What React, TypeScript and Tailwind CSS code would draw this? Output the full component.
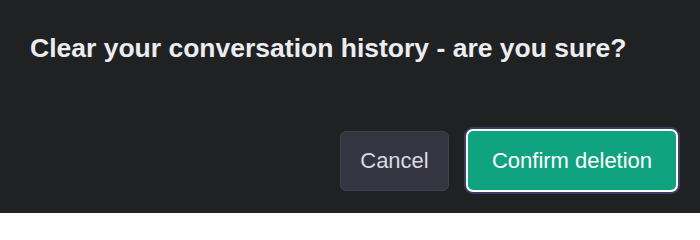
export default function App() {
  return (
    <div className="w-[700px] h-[213px] bg-[#202123] font-['Liberation_Sans',Arial,sans-serif] flex flex-col">
      <h2 className="pl-[30px] pt-[33px] text-[26.5px] leading-[30px] font-bold text-[#ececf1]">
        Clear your conversation history - are you sure?
      </h2>
      <div className="flex justify-end items-center gap-[17px] pr-[22px] mt-auto mb-[21px]">
        <button className="w-[109px] h-[60px] rounded-[6px] bg-[#343541] border border-[#40414f] text-[#d9d9e3] text-[22px]">
          Cancel
        </button>
        <button className="w-[212px] h-[63px] rounded-[7px] bg-[#10a37f] border-2 border-white shadow-[0_0_0_2px_#3b3f63] text-white text-[22px]">
          Confirm deletion
        </button>
      </div>
    </div>
  );
}
